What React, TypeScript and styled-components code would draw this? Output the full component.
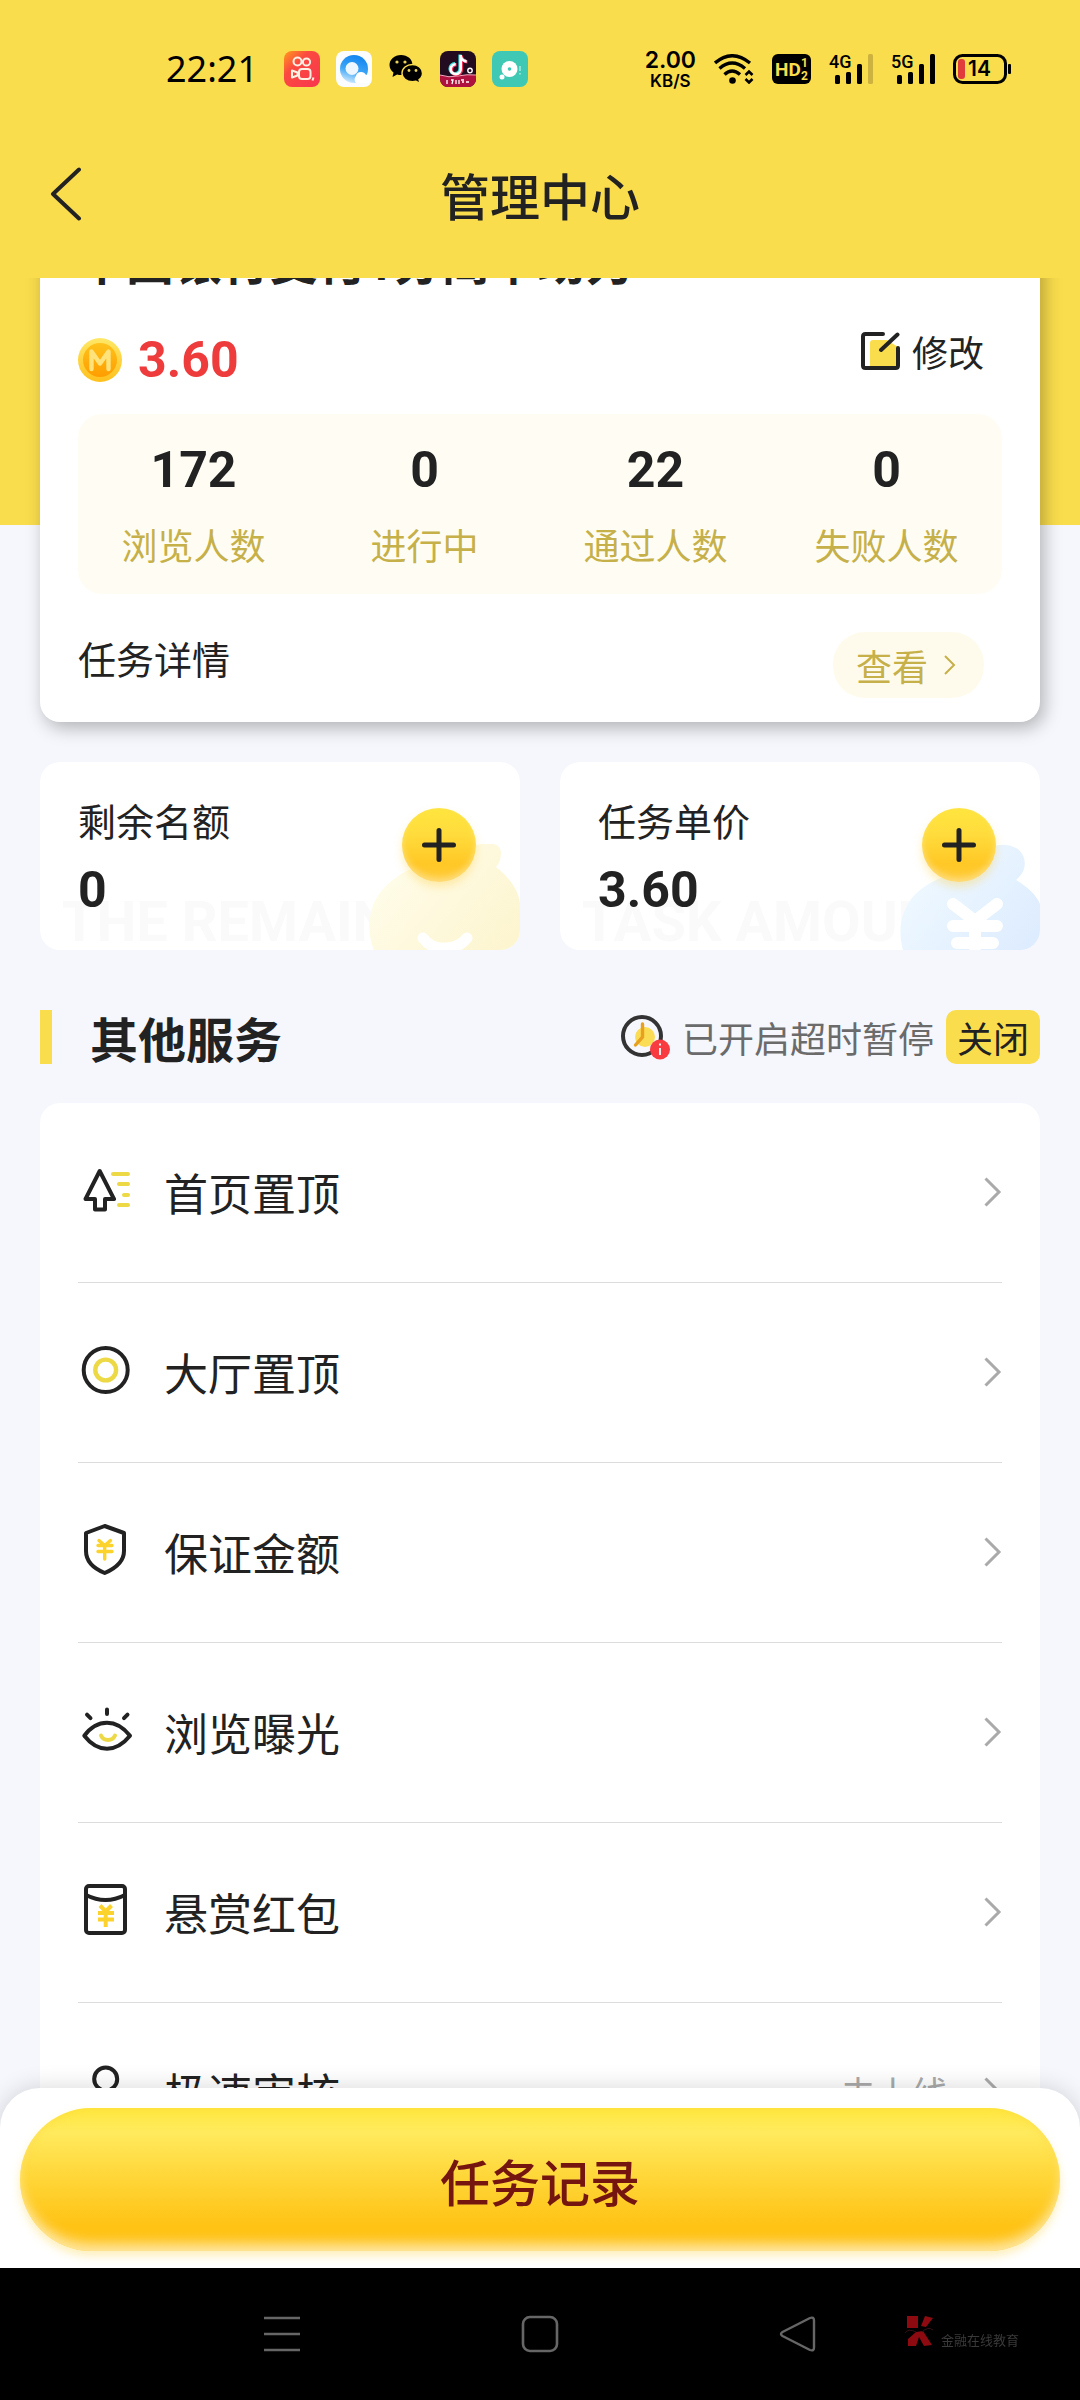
import React, { useLayoutEffect, useRef } from 'react';
import styled, { createGlobalStyle } from 'styled-components';

const yellow = '#fadd4d';
const ink = '#222222';
const gold = '#c5b04a';
const cjk = '"Noto Sans CJK SC", "Noto Sans", sans-serif';
const digits = 'Roboto, "Noto Sans", sans-serif';

/* The page opens part-way down, with the task title under the header. */
const INITIAL_SCROLL = 98;

const GlobalStyle = createGlobalStyle`
  *, *::before, *::after { box-sizing: border-box; }
  body { margin: 0; background: #000; color: ${ink}; font-family: ${cjk}; }
  button { font: inherit; color: inherit; border: 0; padding: 0; background: none; cursor: pointer; }
  a { color: inherit; text-decoration: none; }
  h1, h2, p, ul, dl, dd, dt { margin: 0; padding: 0; }
  ul { list-style: none; }
  svg { display: block; flex: none; }
`;

const Page = styled.div`
  display: flex;
  flex-direction: column;
  height: 100vh;
  background: #f5f7fc;
`;

/* ---------- status bar ---------- */

const StatusBar = styled.div`
  display: flex;
  align-items: center;
  justify-content: space-between;
  height: 138px;
  padding: 0 69px 0 166px;
  background: ${yellow};
  color: #000;
`;

const StatusGroup = styled.div<{ $gap: number }>`
  display: flex;
  align-items: center;
  gap: ${(p) => p.$gap}px;
`;

const Clock = styled.time`
  margin-right: 10px;
  font: 400 36px/44px 'Noto Sans', sans-serif;
`;

const NetSpeed = styled.div`
  display: flex;
  flex-direction: column;
  align-items: center;
  font-family: Inter, sans-serif;
  font-weight: 600;
`;

const SpeedValue = styled.span`
  font-size: 23px;
  line-height: 24px;
`;

const SpeedUnit = styled.span`
  font-size: 17px;
  line-height: 18px;
`;

/* ---------- header ---------- */

const Header = styled.header`
  display: grid;
  grid-template-columns: 120px 1fr 120px;
  align-items: center;
  height: 140px;
  padding-bottom: 28px;
  background: ${yellow};
`;

const BackButton = styled.button`
  display: flex;
  padding-left: 50px;
`;

const PageTitle = styled.h1`
  font-size: 50px;
  line-height: 64px;
  font-weight: 500;
  text-align: center;
`;

/* ---------- scrolling area ---------- */

const Scroller = styled.main`
  flex: 1;
  min-height: 0;
  overflow-y: auto;
  scrollbar-width: none;
`;

const Content = styled.div`
  padding: 20px 40px 80px;
  background: linear-gradient(${yellow} 345px, #f5f7fc 345px);
`;

const TaskCard = styled.section`
  padding: 36px 38px 24px;
  border-radius: 20px;
  background: #fff;
  box-shadow: 4px 6px 18px rgba(0, 0, 0, 0.28);
`;

const TaskTitle = styled.h2`
  font-family: Roboto, ${cjk};
  font-size: 48px;
  line-height: 56px;
  font-weight: 700;
`;

const CardRow = styled.div<{ $top: number }>`
  display: flex;
  align-items: flex-start;
  justify-content: space-between;
  margin-top: ${(p) => p.$top}px;
  padding-right: 18px;
`;

const Price = styled.div`
  display: flex;
  align-items: center;
  gap: 16px;
  color: #ee3b3b;
  font: 700 50px/56px ${digits};
`;

const EditButton = styled.button`
  display: flex;
  align-items: center;
  gap: 12px;
  font-size: 36px;
  line-height: 38px;
`;

const Stats = styled.dl`
  display: grid;
  grid-template-columns: repeat(4, 1fr);
  margin-top: 26px;
  padding: 28px 0 26px;
  border-radius: 24px;
  background: #fffdf3;
  text-align: center;
`;

const Stat = styled.div`
  display: flex;
  flex-direction: column-reverse;
  gap: 22px;
`;

const StatValue = styled.dd`
  font: 700 50px/56px ${digits};
`;

const StatLabel = styled.dt`
  color: ${gold};
  font-size: 36px;
  line-height: 48px;
`;

const DetailLabel = styled.span`
  font-size: 38px;
  line-height: 52px;
`;

const ViewButton = styled.button`
  display: flex;
  align-items: center;
  gap: 16px;
  height: 66px;
  padding: 0 28px 0 23px;
  border-radius: 32px;
  background: #fffbec;
  color: ${gold};
  font-size: 36px;
  line-height: 48px;
`;

/* ---------- amount cards ---------- */

const AmountGrid = styled.div`
  display: grid;
  grid-template-columns: 1fr 1fr;
  gap: 40px;
  margin-top: 40px;
`;

const AmountCard = styled.section`
  position: relative;
  display: flex;
  align-items: flex-start;
  justify-content: space-between;
  padding: 34px 44px 32px 38px;
  border-radius: 20px;
  background: #fff;
  overflow: hidden;
`;

const AmountText = styled.dl`
  position: relative;
  display: flex;
  flex-direction: column;
  gap: 18px;
`;

const AmountLabel = styled.dt`
  font-size: 38px;
  line-height: 48px;
`;

const AmountValue = styled.dd`
  font: 700 50px/56px ${digits};
`;

const Backdrop = styled.span`
  position: absolute;
  left: 22px;
  bottom: 0;
  color: #fafafa;
  font: 700 56px/56px ${digits};
  white-space: nowrap;
`;

const BagSlot = styled.div`
  position: absolute;
  right: 0;
  bottom: 0;
`;

const PlusButton = styled.button`
  position: relative;
  display: grid;
  place-items: center;
  width: 74px;
  height: 74px;
  margin-top: 12px;
  border-radius: 50%;
  background: linear-gradient(#ffe53e 0%, #ffdc3c 35%, #ffc826 75%, #ffcb3a 100%);
  box-shadow: inset 0 -4px 6px rgba(255, 255, 255, 0.35), 0 5px 8px rgba(255, 205, 60, 0.35);
`;

/* ---------- services ---------- */

const SectionHead = styled.div`
  display: flex;
  align-items: center;
  justify-content: space-between;
  height: 54px;
  margin: 60px 0 39px;
`;

const SectionTitle = styled.h2`
  display: flex;
  align-items: center;
  gap: 38px;
  font-size: 48px;
  line-height: 52px;
  font-weight: 700;

  &::before {
    content: '';
    width: 12px;
    height: 54px;
    background: ${yellow};
  }
`;

const TimeoutNote = styled.div`
  display: flex;
  align-items: center;
  gap: 12px;
  color: #6b6b6b;
  font-size: 36px;
  line-height: 54px;
`;

const CloseButton = styled.button`
  height: 54px;
  padding: 0 11px;
  border-radius: 10px;
  background: ${yellow};
  color: ${ink};
  line-height: 54px;
`;

const ServiceList = styled.ul`
  padding: 0 38px;
  border-radius: 20px;
  background: #fff;
`;

const ServiceItem = styled.li`
  border-bottom: 1px solid #dcdcdc;

  &:last-child {
    border-bottom: 0;
  }
`;

const ServiceLink = styled.a`
  display: flex;
  align-items: center;
  gap: 30px;
  height: 179px;
  padding-bottom: 2px;
  font-size: 44px;
  line-height: 56px;
`;

const ServiceEnd = styled.span`
  display: flex;
  align-items: center;
  gap: 36px;
  margin-left: auto;
  color: #aaaaaa;
  font-size: 36px;
`;

/* ---------- footer and system bar ---------- */

const Footer = styled.footer`
  position: relative;
  margin-top: -40px;
  padding: 20px 20px 17px;
  border-radius: 40px 40px 0 0;
  background: #fff;
  box-shadow: 0 0 24px rgba(0, 0, 0, 0.16);
`;

const RecordButton = styled.button`
  display: block;
  width: 100%;
  height: 143px;
  border-radius: 72px;
  background: linear-gradient(#ffe83f 0%, #ffea5e 17%, #ffd83c 45%, #ffc315 82%, #ffc115 100%);
  box-shadow: inset 0 -10px 12px -2px rgba(255, 246, 225, 0.65), inset 0 0 8px rgba(255, 215, 50, 0.6),
    0 5px 10px rgba(255, 215, 80, 0.4);
  color: #75150f;
  font-size: 50px;
  line-height: 64px;
  font-weight: 500;
`;

const SystemBar = styled.nav`
  position: relative;
  display: grid;
  grid-template-columns: repeat(3, 258px);
  justify-content: center;
  align-items: center;
  height: 132px;
  background: #000;
`;

const SystemButton = styled.button`
  display: grid;
  place-items: center;
  height: 80px;
`;

const Brand = styled.div`
  position: absolute;
  right: 61px;
  bottom: 53px;
  display: flex;
  align-items: flex-end;
  gap: 7px;
  color: #3a3a3a;
  font-size: 13px;
  line-height: 15px;
`;

/* ---------- drawings ---------- */

const KuaishouIcon = () => (
  <svg width="36" height="36" viewBox="0 0 36 36" fill="none" aria-hidden="true">
    <defs>
      <linearGradient id="ks" x1="0" y1="0" x2="1" y2="1">
        <stop offset="0" stopColor="#ff9b1c" />
        <stop offset="0.35" stopColor="#fb4a40" />
        <stop offset="1" stopColor="#f8354f" />
      </linearGradient>
    </defs>
    <rect width="36" height="36" rx="8" fill="url(#ks)" />
    <g stroke="#fff0e4" strokeWidth="2">
      <circle cx="13.5" cy="10.5" r="4" />
      <circle cx="22.5" cy="11" r="3.6" />
      <rect x="15" y="18" width="11.500" height="10" rx="3" />
      <path d="M8 19.500v7l5.500-2v-3z" strokeLinejoin="round" />
      <path d="M29.500 26.500l-1 3" />
    </g>
  </svg>
);

const BrowserIcon = () => (
  <svg width="36" height="36" viewBox="0 0 36 36" aria-hidden="true">
    <defs>
      <linearGradient id="qb" x1="0.6" y1="0" x2="0.3" y2="1">
        <stop offset="0" stopColor="#1284f0" />
        <stop offset="0.55" stopColor="#3ca6f7" />
        <stop offset="1" stopColor="#d5ecfd" />
      </linearGradient>
    </defs>
    <rect width="36" height="36" rx="8" fill="#fbfcfe" />
    <circle cx="18" cy="18" r="14" fill="url(#qb)" />
    <circle cx="16" cy="17.500" r="6.500" fill="#eef7ff" />
    <path d="M20 32a5 5 0 0 1 0-7 5 5 0 0 1 5-4 5.500 5.500 0 0 1 5 3 4 4 0 0 1 2 8z" fill="#fff" />
  </svg>
);

const WechatIcon = () => (
  <svg width="36" height="36" viewBox="0 0 36 36" aria-hidden="true">
    <path
      d="M13 4C6.500 4 1.500 8.500 1.500 14c0 3 1.600 5.600 4 7.400L4.500 26l4.600-2.600c1.300.4 2.600.6 4 .6C19 24 24.500 19.800 24.500 14S19.500 4 13 4z"
      fill="#000"
    />
    <path
      d="M24.500 13.500c-6 0-10.500 3.800-10.500 8.700s4.500 8.600 10.500 8.600c1.200 0 2.400-.2 3.500-.5l4 2-1-3.700c2.300-1.600 3.500-3.800 3.500-6.400 0-4.900-4.500-8.700-10-8.700z"
      fill="#000"
      stroke={yellow}
      strokeWidth="1.400"
    />
    <g fill="#e9d35e">
      <circle cx="9" cy="11" r="1.600" />
      <circle cx="17" cy="11" r="1.600" />
      <circle cx="21" cy="19.500" r="1.400" />
      <circle cx="28" cy="19.500" r="1.400" />
    </g>
  </svg>
);

const TiktokIcon = () => (
  <svg width="36" height="36" viewBox="0 0 36 36" aria-hidden="true">
    <defs>
      <clipPath id="tt">
        <rect width="36" height="36" rx="8" />
      </clipPath>
    </defs>
    <g clipPath="url(#tt)">
      <rect width="36" height="36" fill="#230b20" />
      <path d="M0 24q9 3 18 1t18-1v12H0z" fill="#b0123f" />
      <path d="M0 24q9 3 18 1t18-1" fill="none" stroke="#f4a6bb" strokeWidth="1" />
    </g>
    <g fill="none" strokeWidth="3.200">
      <path d="M20 3.500v14a5 5 0 1 1-5-4.800M20 5q1.500 4.500 6 5" stroke="#34e0dc" />
      <path d="M21.500 4.500v14a5 5 0 1 1-5-4.800M21.500 6q1.500 4.500 6 5" stroke="#ee2c5a" />
      <path d="M20.700 4v14a5 5 0 1 1-5-4.800M20.700 5.500q1.500 4.500 6 5" stroke="#fff" strokeWidth="2.600" />
    </g>
    <circle cx="30" cy="19.500" r="2.200" fill="none" stroke="#fff" strokeWidth="1.400" />
    <path d="M7 29v4M11 29h2l-1 4M16 29v4M19 29v4M21 29h3M22 31h2M26 31h3" stroke="#fff" strokeWidth="1.300" fill="none" />
  </svg>
);

const BubbleIcon = () => (
  <svg width="36" height="36" viewBox="0 0 36 36" aria-hidden="true">
    <rect width="36" height="36" rx="8" fill="#3fc9b4" />
    <circle cx="17.500" cy="18" r="8" fill="#fff" />
    <circle cx="10" cy="26" r="2.500" fill="#fff" />
    <circle cx="17.500" cy="18" r="1.800" fill="#3fc9b4" />
    <path d="M28 15v5M28 22v1.500" stroke="#a4e9df" strokeWidth="1.600" />
  </svg>
);

const WifiIcon = () => (
  <svg width="40" height="30" viewBox="0 0 40 30" fill="none" aria-hidden="true">
    <g stroke="#000" strokeWidth="3.400">
      <path d="M1 9Q18-5.500 36 9" />
      <path d="M5.500 14.500Q18 3.500 31 14.500" />
      <path d="M10.500 20.500Q18 13.500 26 20.500" />
    </g>
    <circle cx="18.500" cy="26.500" r="3.300" fill="#000" />
    <path d="M31.500 21l3.500-3.500 3.500 3.500M31.500 25l3.500 3.500 3.500-3.500" stroke="#000" strokeWidth="2.600" />
  </svg>
);

const HdIcon = () => (
  <svg width="39" height="30" viewBox="0 0 39 30" role="img" aria-label="HD">
    <rect width="39" height="30" rx="6" fill="#000" />
    <g fill={yellow} fontFamily="Roboto, sans-serif" fontWeight="700">
      <text x="3" y="22" fontSize="19">HD</text>
      <text x="29" y="13" fontSize="12">1</text>
      <text x="29" y="26" fontSize="12">2</text>
    </g>
  </svg>
);

const SignalIcon = ({ label, weak }: { label: string; weak?: boolean }) => (
  <svg width="44" height="30" viewBox="0 0 44 30" role="img" aria-label={label}>
    <text x="0" y="14" fontSize="18" fontWeight="500" fontFamily="Roboto, sans-serif">
      {label}
    </text>
    <rect x="6" y="21" width="5" height="9" rx="1.500" />
    <rect x="17" y="18" width="5" height="12" rx="1.500" />
    <rect x="28" y="10" width="5" height="20" rx="1.500" />
    <rect x="39" y="0" width="5" height="30" rx="1.500" fill={weak ? '#cdb240' : '#000'} />
  </svg>
);

const BatteryIcon = () => (
  <svg width="58" height="30" viewBox="0 0 58 30" role="img" aria-label="14%">
    <rect x="1.500" y="1.500" width="51" height="27" rx="8" fill="none" stroke="#000" strokeWidth="3" />
    <rect x="5" y="5" width="7" height="20" rx="3" fill="#e03c3c" />
    <rect x="55" y="10" width="3" height="10" rx="1" />
    <text x="15" y="22" fontSize="21" fontWeight="600" fontFamily="Inter, sans-serif">14</text>
  </svg>
);

const BackIcon = () => (
  <svg width="32" height="54" viewBox="0 0 32 54" fill="none" aria-hidden="true">
    <path d="M29 2.500L3 27l26 24.500" stroke={ink} strokeWidth="4" strokeLinecap="round" strokeLinejoin="round" />
  </svg>
);

const CoinIcon = () => (
  <svg width="44" height="44" viewBox="0 0 44 44" aria-hidden="true">
    <defs>
      <linearGradient id="coinRim" x1="0" y1="0" x2="0" y2="1">
        <stop offset="0" stopColor="#ffe868" />
        <stop offset="1" stopColor="#ffc01c" />
      </linearGradient>
      <linearGradient id="coinFace" x1="0" y1="0" x2="0" y2="1">
        <stop offset="0" stopColor="#ffc21c" />
        <stop offset="1" stopColor="#ff9d00" />
      </linearGradient>
    </defs>
    <circle cx="22" cy="22" r="22" fill="url(#coinRim)" />
    <circle cx="22" cy="22" r="17" fill="url(#coinFace)" />
    <path
      d="M13.500 31V13.500l8.500 12 8.500-12V31"
      fill="none"
      stroke="#ffe27a"
      strokeWidth="4.400"
      strokeLinejoin="round"
      strokeLinecap="round"
    />
  </svg>
);

const EditIcon = () => (
  <svg width="39" height="38" viewBox="0 0 39 38" fill="none" aria-hidden="true">
    <path d="M9 36V11q0-3 3-3h14l11 7v21z" fill={yellow} />
    <path
      d="M22 2H4.500Q2 2 2 4.500v29Q2 36 4.500 36h30q2.500 0 2.500-2.500V16M20 18L36.500 2.500"
      stroke={ink}
      strokeWidth="4"
      strokeLinecap="round"
    />
  </svg>
);

const Chevron = ({ width, height, stroke }: { width: number; height: number; stroke: number }) => (
  <svg width={width} height={height} viewBox={`0 0 ${width} ${height}`} fill="none" aria-hidden="true">
    <path
      d={`M${stroke / 2} ${stroke / 2}L${width - stroke} ${height / 2}L${stroke / 2} ${height - stroke / 2}`}
      stroke="currentColor"
      strokeWidth={stroke}
    />
  </svg>
);

const PlusIcon = () => (
  <svg width="34" height="34" viewBox="0 0 34 34" aria-hidden="true">
    <path d="M17 2.500v29M2.500 17h29" stroke={ink} strokeWidth="5" strokeLinecap="round" />
  </svg>
);

const YellowBag = () => (
  <svg width="152" height="106" viewBox="0 0 152 106" aria-hidden="true">
    <defs>
      <linearGradient id="bagY" x1="0" y1="0.2" x2="1" y2="0.8">
        <stop offset="0" stopColor="#fffdec" />
        <stop offset="1" stopColor="#fdf5d0" />
      </linearGradient>
    </defs>
    <path
      d="M6 106C0 92-1 72 8 55C18 38 34 28 50 22L60 4q24 6 48-3Q132-4 133 8q0 10-5 15C140 32 151 46 152 60V106z"
      fill="url(#bagY)"
    />
    <path d="M55 94q6 8 16 10h9q12-1 19-10M70 106h14" stroke="#fff" strokeWidth="11" strokeLinecap="round" fill="none" />
  </svg>
);

const BlueBag = () => (
  <svg width="140" height="106" viewBox="0 0 140 106" aria-hidden="true">
    <defs>
      <linearGradient id="bagB" x1="0" y1="0.2" x2="1" y2="0.8">
        <stop offset="0" stopColor="#f0faff" />
        <stop offset="1" stopColor="#deecff" />
      </linearGradient>
    </defs>
    <path
      d="M3 106C-2 88 0 70 12 54C20 44 34 36 46 32L62 10q16 4 28-6Q104-3 118 5q9 8 6 20-2 6-8 11C126 42 136 50 140 60V106z"
      fill="url(#bagB)"
    />
    <path d="M53 60l22 17 22-17M53 82h44M57 99h36M75 78v26" stroke="#fff" strokeWidth="12" strokeLinecap="round" fill="none" />
  </svg>
);

const TimeoutIcon = () => (
  <svg width="49" height="46" viewBox="0 0 49 46" fill="none" aria-hidden="true">
    <circle cx="24" cy="23" r="10" fill="#fbdc55" />
    <circle cx="21" cy="22" r="19" stroke="#333" strokeWidth="4" />
    <path d="M21.500 10v13l-7 8" stroke="#e8a021" strokeWidth="3.400" strokeLinecap="round" />
    <circle cx="39" cy="35.500" r="10" fill="#f83a41" />
    <path d="M39 34v7M39 29.500v2" stroke="#fff" strokeWidth="1.800" />
  </svg>
);

const ServiceSvg = styled.svg.attrs({ width: 56, height: 56, viewBox: '0 0 56 56', 'aria-hidden': true })`
  fill: none;
  stroke: ${ink};
  stroke-width: 4px;
  stroke-linecap: round;
  stroke-linejoin: round;
`;

const lemon = '#ecd945';
const amber = '#fbd32c';

const HomeTopIcon = () => (
  <ServiceSvg>
    <path d="M21.700 7L36 35H27V45.500H17V35H7.500z" />
    <path d="M35 10H50M41 20H50M46 31H50M41 41H50" stroke={lemon} />
  </ServiceSvg>
);

const HallTopIcon = () => (
  <ServiceSvg>
    <circle cx="27.700" cy="26" r="22" />
    <circle cx="27.700" cy="26" r="10.400" stroke={lemon} strokeWidth="4.400" />
  </ServiceSvg>
);

const ShieldIcon = () => (
  <ServiceSvg>
    <path d="M26.700 2L46 9V27C46 38 36 45 26.700 49C17 45 8 38 8 27V9z" />
    <path d="M21 16.500L26.700 21.500L32.500 16.500M20 21.500H34M20 27.500H34M26.700 22V35" stroke={amber} strokeWidth="3.400" />
  </ServiceSvg>
);

const EyeIcon = () => (
  <ServiceSvg>
    <path d="M6.300 31.700C12 24 20 18.700 29 18.700S46 24 52 31.700C46 39 38 44.700 29 44.700S12 39 6.300 31.700z" />
    <path d="M29 5.500V10M9 10.700L12.500 14.200M49.500 10.700L46 14.200" />
    <path d="M23 31.500Q25 36 30 36T37 31.500" stroke={lemon} />
  </ServiceSvg>
);

const EnvelopeIcon = () => (
  <ServiceSvg>
    <rect x="8" y="2" width="39" height="47" rx="3" />
    <path d="M8 11Q27.500 21 47 11" />
    <path d="M22 21.500L27.700 27.500L33.500 21.500M20 29H36M20 35.500H36M27.700 29V43" stroke={amber} strokeLinecap="butt" />
  </ServiceSvg>
);

const SearchIcon = () => (
  <ServiceSvg>
    <circle cx="27.700" cy="15" r="11.500" />
    <path d="M27.700 27V36M12 48Q27.700 32 43 48" />
  </ServiceSvg>
);

const BrandIcon = () => (
  <svg width="30" height="32" viewBox="0 0 30 32" aria-hidden="true">
    <path d="M3 1h11v12H3zM17 11L21 1l8 2-7 9zM4 31v-7l8-7 7-1 9 14-8 1-5-9-3 9z" fill="#8d0a10" />
    <path d="M1 18q3-5 11-1M18 17q6-6 11-2" stroke="#351014" fill="none" />
  </svg>
);

/* ---------- page ---------- */

const stats = [
  { label: '浏览人数', value: '172' },
  { label: '进行中', value: '0' },
  { label: '通过人数', value: '22' },
  { label: '失败人数', value: '0' },
];

const amounts = [
  { label: '剩余名额', value: '0', backdrop: 'THE REMAIN', Bag: YellowBag },
  { label: '任务单价', value: '3.60', backdrop: 'TASK AMOUNT', Bag: BlueBag },
];

const services = [
  { label: '首页置顶', Icon: HomeTopIcon },
  { label: '大厅置顶', Icon: HallTopIcon },
  { label: '保证金额', Icon: ShieldIcon },
  { label: '浏览曝光', Icon: EyeIcon },
  { label: '悬赏红包', Icon: EnvelopeIcon },
  { label: '极速审核', Icon: SearchIcon, note: '未上线' },
];

export default function App() {
  const scroller = useRef<HTMLElement>(null);

  useLayoutEffect(() => {
    if (scroller.current) scroller.current.scrollTop = INITIAL_SCROLL;
  }, []);

  return (
    <Page>
      <GlobalStyle />
      <StatusBar>
        <StatusGroup $gap={16}>
          <Clock>22:21</Clock>
          <KuaishouIcon />
          <BrowserIcon />
          <WechatIcon />
          <TiktokIcon />
          <BubbleIcon />
        </StatusGroup>
        <StatusGroup $gap={18}>
          <NetSpeed>
            <SpeedValue>2.00</SpeedValue>
            <SpeedUnit>KB/S</SpeedUnit>
          </NetSpeed>
          <WifiIcon />
          <HdIcon />
          <SignalIcon label="4G" weak />
          <SignalIcon label="5G" />
          <BatteryIcon />
        </StatusGroup>
      </StatusBar>

      <Header>
        <BackButton aria-label="返回">
          <BackIcon />
        </BackButton>
        <PageTitle>管理中心</PageTitle>
      </Header>

      <Scroller ref={scroller}>
        <Content>
          <TaskCard>
            <TaskTitle>中国银行支付1分简单助力</TaskTitle>
            <CardRow $top={40}>
              <Price>
                <CoinIcon />
                3.60
              </Price>
              <EditButton>
                <EditIcon />
                修改
              </EditButton>
            </CardRow>
            <Stats>
              {stats.map((s) => (
                <Stat key={s.label}>
                  <StatLabel>{s.label}</StatLabel>
                  <StatValue>{s.value}</StatValue>
                </Stat>
              ))}
            </Stats>
            <CardRow $top={38}>
              <DetailLabel>任务详情</DetailLabel>
              <ViewButton>
                查看
                <Chevron width={12} height={20} stroke={2} />
              </ViewButton>
            </CardRow>
          </TaskCard>

          <AmountGrid>
            {amounts.map(({ label, value, backdrop, Bag }) => (
              <AmountCard key={label}>
                <Backdrop aria-hidden="true">{backdrop}</Backdrop>
                <BagSlot>
                  <Bag />
                </BagSlot>
                <AmountText>
                  <AmountLabel>{label}</AmountLabel>
                  <AmountValue>{value}</AmountValue>
                </AmountText>
                <PlusButton aria-label={`增加${label}`}>
                  <PlusIcon />
                </PlusButton>
              </AmountCard>
            ))}
          </AmountGrid>

          <SectionHead>
            <SectionTitle>其他服务</SectionTitle>
            <TimeoutNote>
              <TimeoutIcon />
              已开启超时暂停
              <CloseButton>关闭</CloseButton>
            </TimeoutNote>
          </SectionHead>

          <ServiceList>
            {services.map(({ label, Icon, note }) => (
              <ServiceItem key={label}>
                <ServiceLink href="#">
                  <Icon />
                  {label}
                  <ServiceEnd>
                    {note}
                    <Chevron width={18} height={30} stroke={3} />
                  </ServiceEnd>
                </ServiceLink>
              </ServiceItem>
            ))}
          </ServiceList>
        </Content>
      </Scroller>

      <Footer>
        <RecordButton>任务记录</RecordButton>
      </Footer>

      <SystemBar>
        <SystemButton aria-label="最近任务">
          <svg width="38" height="38" viewBox="0 0 38 38" aria-hidden="true">
            <path d="M1 3h36M1 19h36M1 35h36" stroke="#666" strokeWidth="2.600" />
          </svg>
        </SystemButton>
        <SystemButton aria-label="主屏幕">
          <svg width="38" height="38" viewBox="0 0 38 38" aria-hidden="true">
            <rect x="2" y="2" width="34" height="34" rx="7" fill="none" stroke="#666" strokeWidth="2.600" />
          </svg>
        </SystemButton>
        <SystemButton aria-label="返回上一页">
          <svg width="38" height="38" viewBox="0 0 38 38" aria-hidden="true">
            <path
              d="M3.500 17L31 3q4-1.500 4 2.500v27q0 4-4 2.500L3.500 21q-3-2 0-4z"
              fill="none"
              stroke="#666"
              strokeWidth="2.400"
              strokeLinejoin="round"
            />
          </svg>
        </SystemButton>
        <Brand>
          <BrandIcon />
          金融在线教育
        </Brand>
      </SystemBar>
    </Page>
  );
}
